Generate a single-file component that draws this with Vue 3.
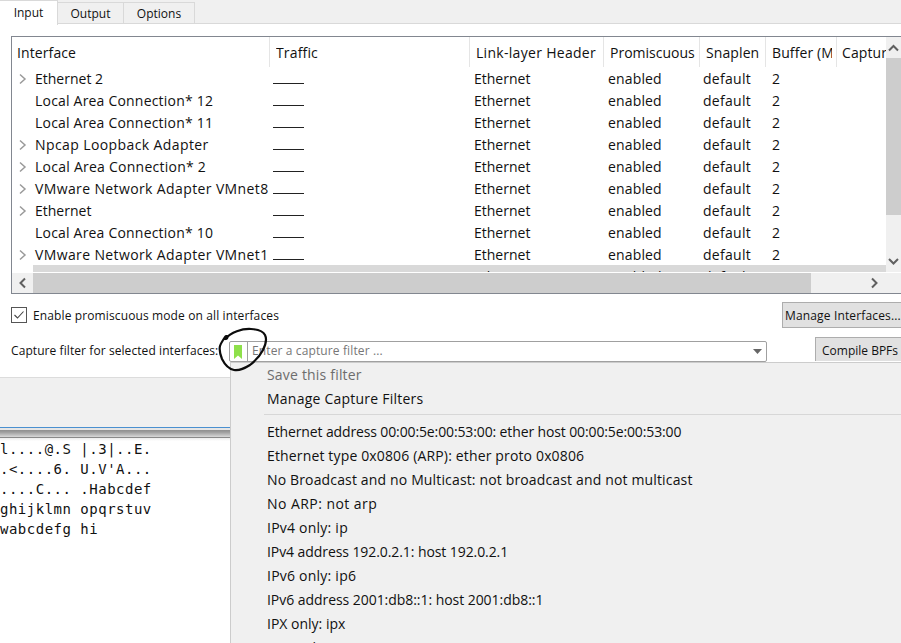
<script setup>
const tabs = ['Input', 'Output', 'Options']
const columns = [
  { label: 'Interface', w: 258, pad: 5, ls: 0.1 }, { label: 'Traffic', w: 200, pad: 6, ls: 0.15 },
  { label: 'Link-layer Header', w: 134, pad: 6, ls: 0.3 }, { label: 'Promiscuous', w: 96, pad: 6, ls: 0 },
  { label: 'Snaplen', w: 66, pad: 6, ls: 0.1 }, { label: 'Buffer (M', w: 71, pad: 6, ls: 0.1 },
  { label: 'Captur', w: 49, pad: 5, ls: 0.1 }
]
const rows = [
  { name: 'Ethernet 2', arrow: true, ls: 0 },
  { name: 'Local Area Connection* 12', arrow: false, ls: 0.2 },
  { name: 'Local Area Connection* 11', arrow: false, ls: 0.2 },
  { name: 'Npcap Loopback Adapter', arrow: true, ls: 0.4 },
  { name: 'Local Area Connection* 2', arrow: true, ls: 0.25 },
  { name: 'VMware Network Adapter VMnet8', arrow: true, ls: 0.38 },
  { name: 'Ethernet', arrow: true, ls: 0 },
  { name: 'Local Area Connection* 10', arrow: false, ls: 0.2 },
  { name: 'VMware Network Adapter VMnet1', arrow: true, ls: 0.38 },
  { name: 'Wi-Fi', arrow: true, ls: 0 }
]
const hex = ['l....@.S |.3|..E.', '.<....6. U.V\'A...', '....C... .Habcdef', 'ghijklmn opqrstuv', 'wabcdefg hi']
const menu = [
  { t: 'Ethernet address 00:00:5e:00:53:00: ether host 00:00:5e:00:53:00', ls: -0.125 },
  { t: 'Ethernet type 0x0806 (ARP): ether proto 0x0806', ls: 0.15 },
  { t: 'No Broadcast and no Multicast: not broadcast and not multicast', ls: 0.15 },
  { t: 'No ARP: not arp', ls: 0.45 },
  { t: 'IPv4 only: ip', ls: 0.23 },
  { t: 'IPv4 address 192.0.2.1: host 192.0.2.1', ls: -0.08 },
  { t: 'IPv6 only: ip6', ls: 0.23 },
  { t: 'IPv6 address 2001:db8::1: host 2001:db8::1', ls: -0.05 },
  { t: 'IPX only: ipx', ls: 0 },
  { t: 'TCP only: tcp', ls: 0 }
]
</script>

<template>
  <div class="page">
    <div class="tabbar">
      <div v-for="(t, i) in tabs" :key="t" class="tab" :class="{ active: i === 0 }">{{ t }}</div>
    </div>

    <div class="pane">
      <div class="tablebox">
        <div class="tablemain">
          <div class="viewport">
            <div class="thead">
              <div v-for="c in columns" :key="c.label" class="th" :style="{ width: c.w + 'px', paddingLeft: c.pad + 'px', letterSpacing: c.ls + 'px' }">
                <span>{{ c.label }}</span>
              </div>
            </div>
            <div v-for="(r, i) in rows" :key="r.name" class="tr" :class="{ last: i === 9 }">
              <div class="td first">
                <svg v-if="r.arrow" class="chev" width="9" height="12" viewBox="0 0 9 12">
                  <path d="M2 1.500 7 6 2 10.500" fill="none" stroke="#9a9a9a" stroke-width="1.500" />
                </svg>
                <span class="name" :style="{ letterSpacing: r.ls + 'px' }">{{ r.name }}</span>
              </div>
              <div class="td traffic"><i class="spark"></i></div>
              <div class="td link">Ethernet</div>
              <div class="td prom">enabled</div>
              <div class="td snap">default</div>
              <div class="td buf">2</div>
            </div>
          </div>
          <div class="vscroll">
            <svg width="15" height="21" viewBox="0 0 15 21"><path d="M3 13.500 7.500 9 12 13.500" fill="none" stroke="#606060" stroke-width="2" /></svg>
            <div class="vthumb"></div>
            <div class="vspace"></div>
            <svg width="15" height="21" viewBox="0 0 15 21"><path d="M3 8 7.500 12.500 12 8" fill="none" stroke="#606060" stroke-width="2" /></svg>
          </div>
        </div>
        <div class="hscroll">
          <svg width="21" height="20" viewBox="0 0 21 20"><path d="M13 5.500 8.500 10 13 14.500" fill="none" stroke="#606060" stroke-width="2" /></svg>
          <div class="hthumb"></div>
          <svg class="hright" width="22" height="20" viewBox="0 0 22 20"><path d="M9 5.500 13.500 10 9 14.500" fill="none" stroke="#606060" stroke-width="2" /></svg>
        </div>
      </div>

      <div class="optrow">
        <label class="check">
          <svg width="16" height="16" viewBox="0 0 16 16"><rect x=".5" y=".5" width="15" height="15" fill="#fff" stroke="#555" /><path d="M3.500 8 6.500 11 12.500 4.500" fill="none" stroke="#444" stroke-width="1.100" /></svg>
          <span>Enable promiscuous mode on all interfaces</span>
        </label>
        <div class="btn manage">Manage Interfaces...</div>
      </div>

      <div class="filterrow">
        <span class="flabel">Capture filter for selected interfaces:</span>
        <div class="combo">
          <div class="bookmark">
            <svg width="8" height="14" viewBox="0 0 8 14"><path d="M0 0h8v14L4 10.500 0 14z" fill="#8ee04a" /></svg>
          </div>
          <span class="placeholder">Enter a capture filter ...</span>
          <svg class="caret" width="9" height="6" viewBox="0 0 9 6"><path d="M0 0h9L4.500 5z" fill="#666" /></svg>
        </div>
        <div class="btn compile">Compile BPFs</div>
      </div>
    </div>

    <div class="lower">
      <div class="leftpane">
        <div class="graybar"></div>
        <div class="splitter"></div>
        <div class="hex">
          <div v-for="h in hex" :key="h" class="hexline">{{ h }}</div>
        </div>
      </div>
    </div>

    <div class="popup">
      <div class="mi disabled">Save this filter</div>
      <div class="mi manage-item">Manage Capture Filters</div>
      <div class="sep"></div>
      <div v-for="m in menu" :key="m.t" class="mi" :style="{ letterSpacing: m.ls + 'px' }">{{ m.t }}</div>
    </div>

    <svg class="circle" width="60" height="52" viewBox="0 0 60 52">
      <path d="M11 14C17 7 28 3.500 37 4c6 .3 12 2 14 6 2 4 1 9-2 15-3 6-8 11-13 15-5 3-10 6-16 5-5-1-9-5-12-11-2-5-3-9-2-13 1-3 3-6 5-9 1-1.500 3-1 2.500.5-.5 1.500-2.500 2-2.500.5" fill="none" stroke="#0c0c0c" stroke-width="2.200" stroke-linecap="round" />
    </svg>
  </div>
</template>

<style>
html, body { margin: 0; padding: 0; }
</style>

<style scoped>
.page {
  position: relative;
  width: 901px;
  height: 643px;
  overflow: hidden;
  background: #f0f0f0;
  font-family: "Open Sans", "Noto Sans", sans-serif;
  font-size: 14px;
  color: #111;
  display: flex;
  flex-direction: column;
}
.tabbar {
  display: flex;
  height: 23px;
  border-bottom: 1px solid #d9d9d9;
  flex: none;
}
.tab {
  height: 21px;
  margin-top: 2px;
  border: 1px solid #d9d9d9;
  border-bottom: none;
  border-left: none;
  font-size: 12px;
  line-height: 22px;
  text-align: center;
  width: 65px;
}
.tab:nth-child(3) { width: 70px; }
.tab.active {
  width: 57px;
  height: 24px;
  margin-top: 0;
  line-height: 24px;
  background: #fff;
  position: relative;
}
.pane {
  background: #fff;
  flex: none;
  padding-top: 12px;
}
.tablebox {
  margin-left: 11px;
  height: 256px;
  border: 1px solid #828790;
  border-right: none;
  background: #fff;
  display: flex;
  flex-direction: column;
}
.tablemain { display: flex; height: 235px; flex: none; }
.viewport { width: 874px; overflow: hidden; flex: none; }
.thead { display: flex; height: 30px; }
.th {
  flex: none;
  box-sizing: border-box;
  padding-right: 4px;
  border-right: 1px solid #e5e5e5;
  line-height: 32px;
  white-space: nowrap;
  height: 30px;
}
.th span { display: block; overflow: hidden; height: 30px; }
.th:last-child { border-right: none; padding-right: 0; }
.tr { display: flex; height: 22px; line-height: 24px; white-space: nowrap; }
.tr.last { background: #d9d9d9; margin-left: 21px; }
.tr.last .first { margin-left: -21px; }
.td { flex: none; box-sizing: border-box; }
.first { width: 260px; display: flex; align-items: flex-start; position: relative; }
.chev { position: absolute; left: 6px; top: 6px; }
.name { margin-left: 23px; }
.traffic { width: 202px; position: relative; }
.spark { position: absolute; left: 1px; top: 16px; width: 31px; height: 1px; background: #222; }
.link { width: 133px; }
.prom { width: 96px; letter-spacing: .15px; padding-left: 1px; }
.snap { width: 68px; letter-spacing: .3px; }
.buf { width: 60px; padding-left: 1px; }
.vscroll {
  width: 15px;
  flex: none;
  background: #f0f0f0;
  display: flex;
  flex-direction: column;
}
.vscroll svg { flex: none; }
.vthumb { height: 157px; background: #cdcdcd; flex: none; }
.vspace { flex: 1; }
.hscroll {
  height: 20px;
  flex: none;
  background: #f0f0f0;
  display: flex;
  align-items: center;
  border-top: 1px solid #fff;
}
.hthumb { width: 778px; height: 20px; background: #cdcdcd; flex: none; }
.hright { margin-left: 52px; flex: none; }
.optrow {
  height: 44px;
  display: flex;
  align-items: flex-start;
  justify-content: space-between;
  padding-left: 11px;
}
.check {
  display: flex;
  align-items: center;
  gap: 6px;
  font-size: 12px;
  letter-spacing: .12px;
  margin-top: 13px;
  height: 16px;
}
.btn {
  background: #e1e1e1;
  border: 1px solid #adadad;
  font-size: 12px;
  box-sizing: border-box;
  white-space: nowrap;
}
.manage {
  width: 120px;
  height: 26px;
  line-height: 25px;
  padding-left: 2px;
  margin-top: 8px;
  margin-right: -1px;
  letter-spacing: .15px;
}
.filterrow {
  height: 39px;
  display: flex;
  align-items: flex-start;
  padding-left: 11px;
  border-bottom: 1px solid #dcdcdc;
}
.flabel {
  font-size: 12px;
  line-height: 26px;
  width: 218px;
  white-space: nowrap;
  flex: none;
  letter-spacing: .08px;
}
.combo {
  width: 538px;
  height: 21px;
  margin-top: 3px;
  box-sizing: border-box;
  border: 1px solid #a0a0a0;
  border-radius: 2px;
  background: #fff;
  display: flex;
  align-items: center;
  flex: none;
}
.bookmark {
  width: 18px;
  height: 19px;
  border-right: 1px solid #a0a0a0;
  display: flex;
  justify-content: center;
  align-items: center;
  flex: none;
  padding-right: 2px;
  box-sizing: border-box;
}
.placeholder {
  margin-left: 4px;
  font-size: 12px;
  line-height: 17px;
  height: 19px;
  color: #777;
  flex: 1;
  letter-spacing: .12px;
}
.caret { margin-right: 4px; flex: none; }
.compile {
  margin-left: 48px;
  margin-top: -1px;
  width: 90px;
  height: 24px;
  line-height: 25px;
  padding-left: 6px;
  border-bottom: none;
  flex: none;
}
.lower { flex: 1; min-height: 0; display: flex; }
.leftpane { width: 230px; display: flex; flex-direction: column; }
.graybar { height: 49px; flex: none; border-bottom: 1px solid #4a90d0; }
.splitter {
  height: 10px;
  flex: none;
  background: linear-gradient(#e6e6e6 0, #e6e6e6 2px, #8f8f8f 2px, #9c9c9c 4px, #d8d8d8 9px);
  border-bottom: 1px solid #8a8a8a;
  box-sizing: border-box;
}
.hex {
  flex: 1;
  background: linear-gradient(#ececec 0, #fff 3px);
  padding-top: 1px;
}
.hexline {
  font-family: "DejaVu Sans Mono", "Liberation Mono", monospace;
  font-size: 14px;
  line-height: 20px;
  letter-spacing: .5px;
  white-space: pre;
  color: #111;
}
.popup {
  position: absolute;
  left: 230px;
  top: 362px;
  right: 0;
  bottom: 0;
  border-left: 1px solid #ccc;
  border-top: 1px solid #ccc;
  background: #f0f0f0;
  box-sizing: border-box;
  overflow: hidden;
}
.mi { height: 24px; line-height: 24px; padding-left: 36px; white-space: nowrap; }
.mi.disabled { color: #6d6d6d; letter-spacing: .19px; }
.mi.manage-item { letter-spacing: .23px; }
.sep { height: 1px; background: #d7d7d7; margin: 3px 0 5px 33px; }
.circle { position: absolute; left: 214px; top: 325px; pointer-events: none; }
</style>
